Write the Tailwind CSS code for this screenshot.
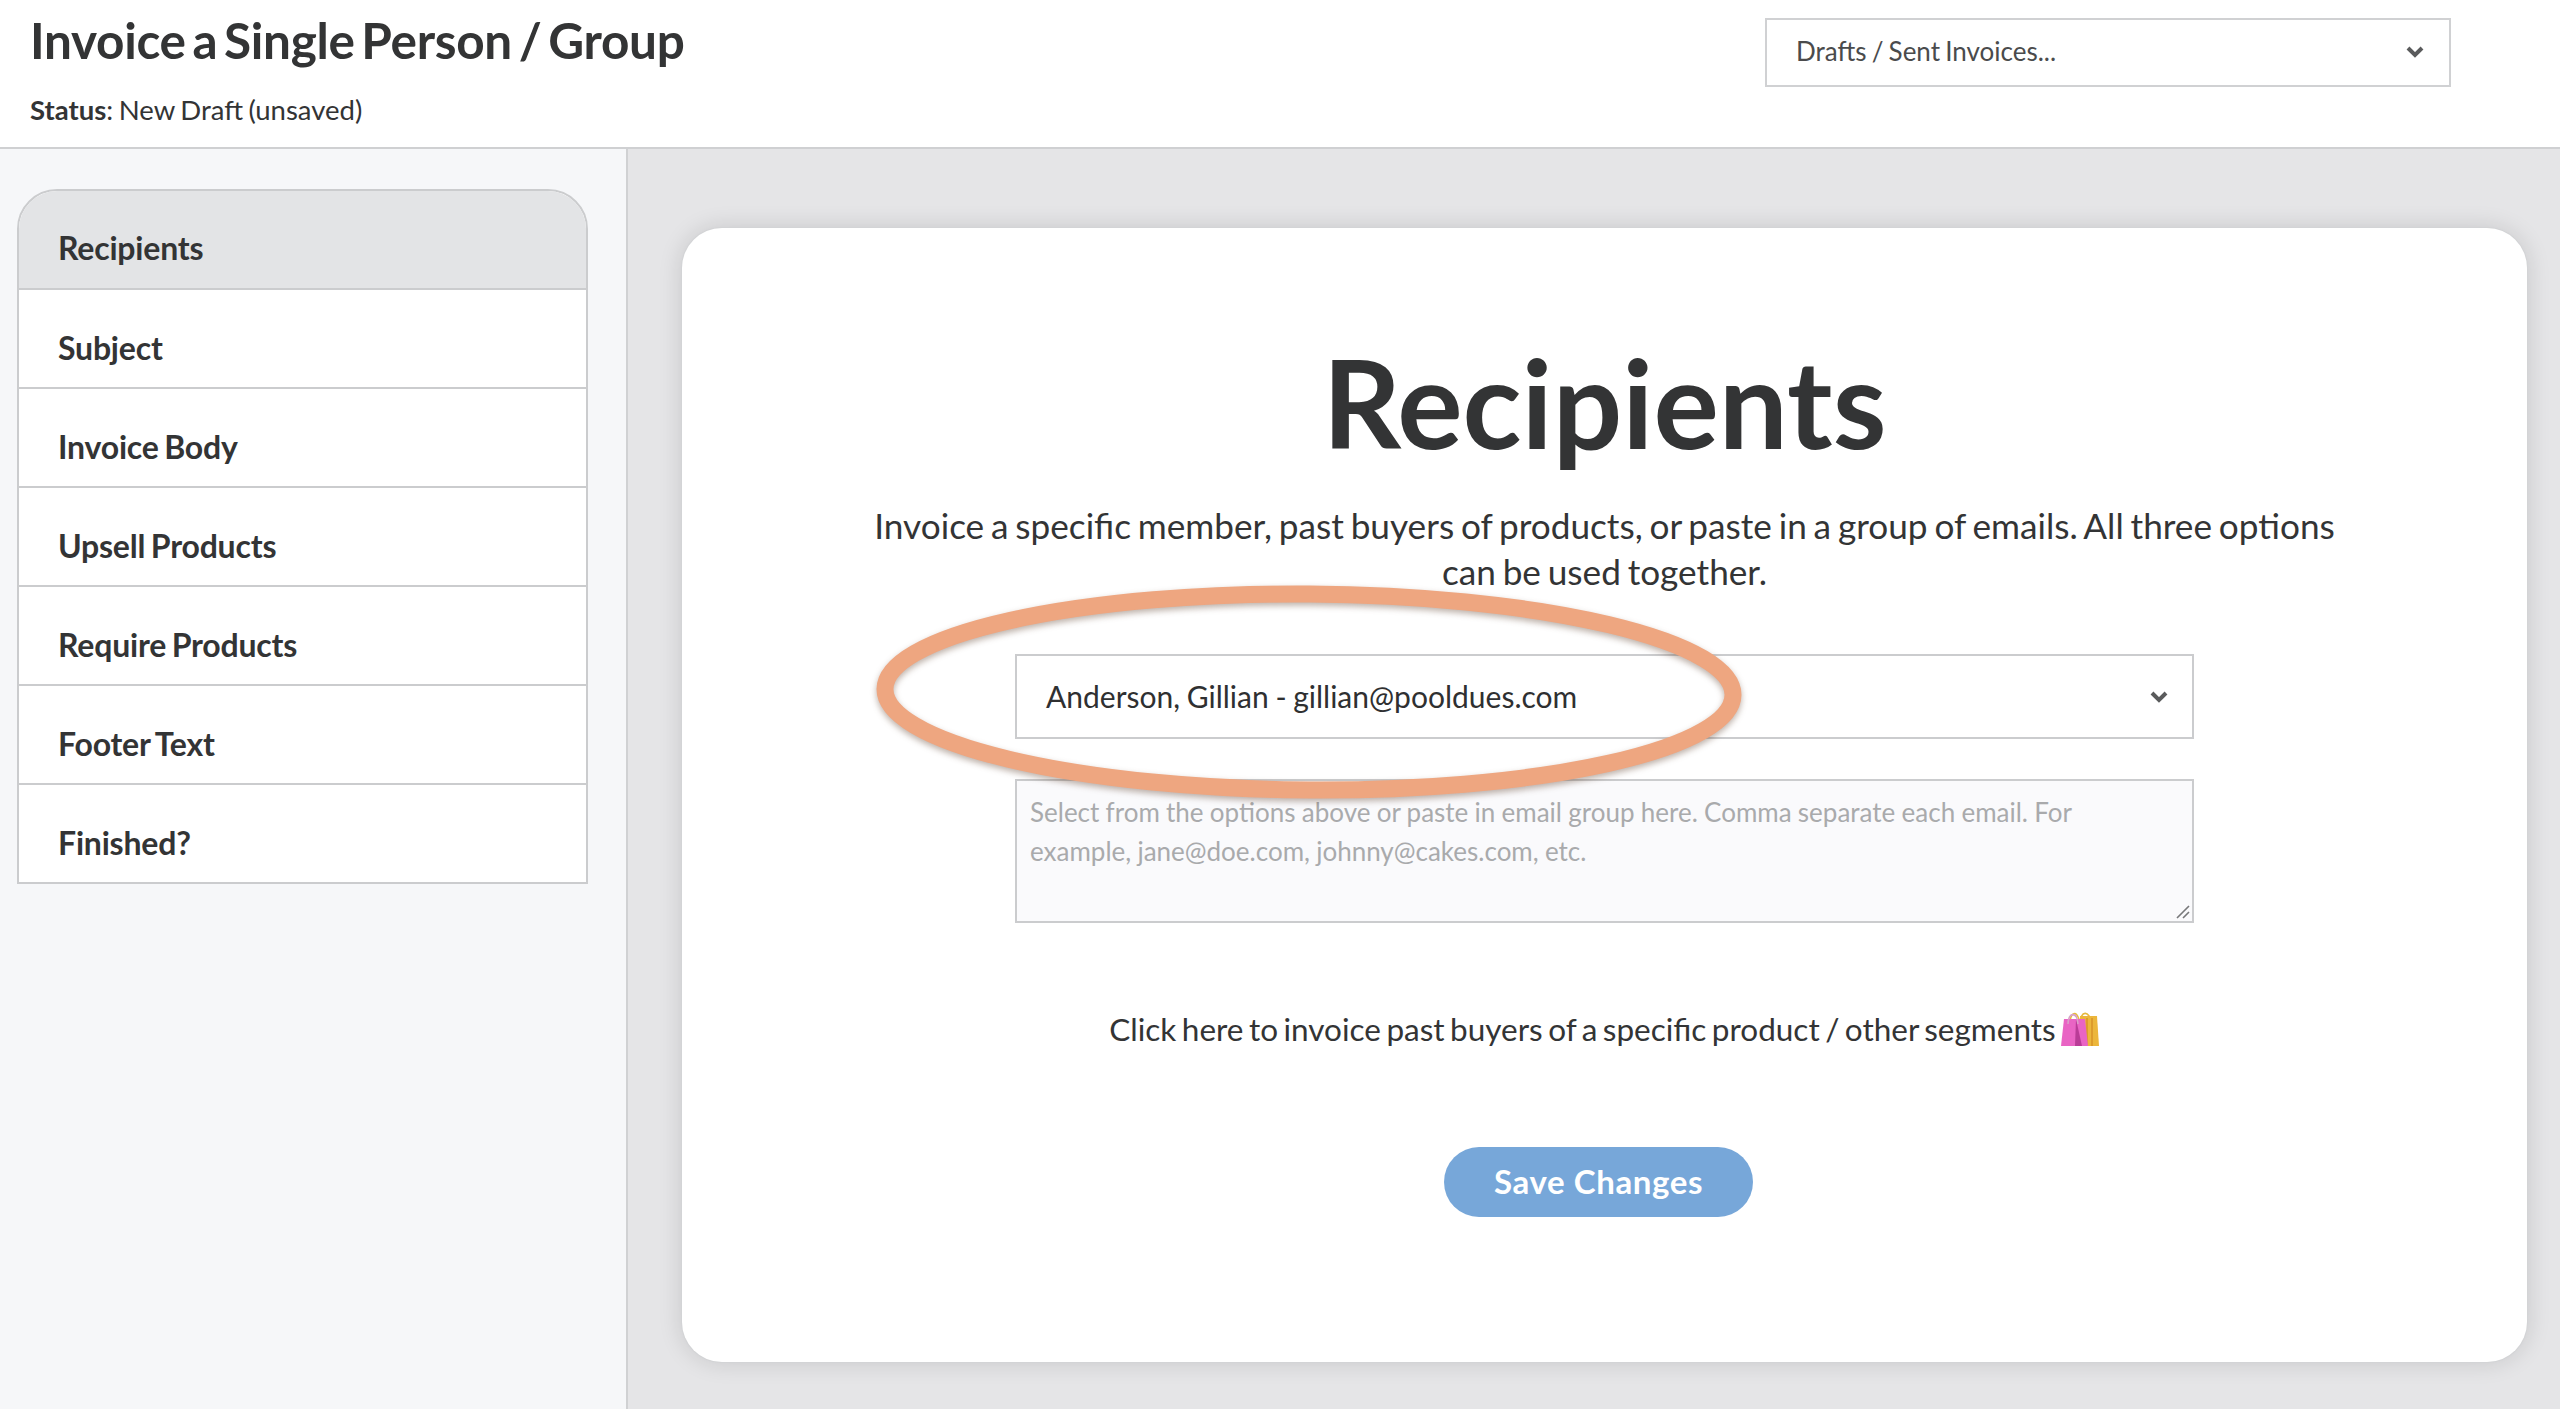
<!DOCTYPE html>
<html lang="en">
<head>
  <meta charset="UTF-8">
  <title>Invoice a Single Person / Group</title>
  <script src="https://cdn.jsdelivr.net/npm/@tailwindcss/browser@4"></script>
</head>
<body class="bg-[#e5e5e7] font-['Lato',sans-serif] text-[#333435]">
  <div class="flex h-[1409px] flex-col overflow-hidden">

    <!-- top bar -->
    <header class="flex h-[149px] shrink-0 items-start justify-between border-b-2 border-[#cfd0d2] bg-white">
      <div class="pl-[30px] pt-[10px]">
        <h1 class="text-[49.5px] font-bold leading-[60px] tracking-[-0.3px] [word-spacing:-5px]">Invoice a Single Person / Group</h1>
        <p class="mt-[22px] text-[27.5px] leading-[36px] [word-spacing:-1.5px]"><b>Status</b>: New Draft (unsaved)</p>
      </div>
      <div class="mr-[109px] mt-[18px] flex h-[69px] w-[686px] items-center justify-between border-2 border-[#d0d1d3] pb-[2px] pl-[29px] pr-[25px] text-[26px] text-[#4a4b4c] [word-spacing:-1.5px]">
        <span>Drafts / Sent Invoices...</span>
        <svg class="h-[14px] w-[18px]" viewBox="0 0 18 14" fill="none" stroke="#5a5b5c" stroke-width="4"><path d="M2 3l7 7 7-7"/></svg>
      </div>
    </header>

    <div class="flex min-h-0 flex-1">
      <!-- steps -->
      <aside class="w-[628px] shrink-0 border-r-2 border-[#d0d1d3] bg-[#f6f7f9] pl-[17px] pr-[38px] pt-[40px]">
        <nav class="overflow-hidden rounded-t-[40px] border-2 border-[#cbccce] bg-white text-[32px] font-bold leading-[97px] tracking-[-0.2px] [word-spacing:-2px]">
          <a class="block h-[99px] border-b-2 border-[#cbccce] bg-[#e3e4e6] pl-[39px] pt-[8px]">Recipients</a>
          <a class="block h-[99px] border-b-2 border-[#cbccce] pl-[39px] pt-[9px]">Subject</a>
          <a class="block h-[99px] border-b-2 border-[#cbccce] pl-[39px] pt-[9px]">Invoice Body</a>
          <a class="block h-[99px] border-b-2 border-[#cbccce] pl-[39px] pt-[9px]">Upsell Products</a>
          <a class="block h-[99px] border-b-2 border-[#cbccce] pl-[39px] pt-[9px]">Require Products</a>
          <a class="block h-[99px] border-b-2 border-[#cbccce] pl-[39px] pt-[9px]">Footer Text</a>
          <a class="block h-[97px] pl-[39px] pt-[9px]">Finished?</a>
        </nav>
      </aside>

      <!-- main -->
      <main class="min-w-0 flex-1 pl-[54px] pr-[33px] pt-[79px]">
        <section class="relative flex h-[1134px] flex-col items-center rounded-[40px] bg-white pt-[109px] shadow-[0_0_0_1px_#d3d4d6,0_0_24px_rgba(0,0,0,0.14)]">
          <h2 class="text-[122.5px] font-bold leading-[130px]">Recipients</h2>
          <p class="mt-[35px] w-[1500px] text-center text-[35.2px] leading-[46px] [word-spacing:-2.2px]">Invoice a specific member, past buyers of products, or paste in a group of emails. All three options can be used together.</p>

          <div class="mt-[60px] flex h-[85px] w-[1179px] shrink-0 items-center justify-between border-2 border-[#cbccce] bg-white pl-[29px] pr-[24px] text-[30px] text-[#2f3031] [word-spacing:-1px]">
            <span>Anderson, Gillian - gillian@pooldues.com</span>
            <svg class="h-[14px] w-[18px]" viewBox="0 0 18 14" fill="none" stroke="#5a5b5c" stroke-width="4"><path d="M2 3l7 7 7-7"/></svg>
          </div>
          <div class="relative mt-[40px] h-[144px] w-[1179px] shrink-0">
            <textarea class="block h-full w-full resize-none border-2 border-[#cbccce] bg-[#fafafc] py-[12px] pl-[13px] pr-[100px] text-[26px] leading-[39px] [word-spacing:-0.4px] placeholder:text-[#a9aaac]" placeholder="Select from the options above or paste in email group here. Comma separate each email. For example, jane@doe.com, johnny@cakes.com, etc."></textarea>
            <svg class="pointer-events-none absolute bottom-[4px] right-[4px] h-[14px] w-[14px]" viewBox="0 0 14 14" fill="none" stroke="#77787a" stroke-width="1.6"><path d="M1 13L13 1M7 13l6-6"/></svg>
          </div>

          <p class="mt-[84px] flex items-center text-[31.5px] leading-[44px] [word-spacing:-2.6px]">Click here to invoice past buyers of a specific product / other segments
            <svg class="ml-[4px] h-[38px] w-[40px]" viewBox="0 0 40 38">
              <path d="M10 14C10 2 17 0 19 10M20 14C20 0 30 0 31 13" fill="none" stroke="#e6b93f" stroke-width="1.6"/>
              <path d="M20 6h17l2 30H24z" fill="#ecb63b"/>
              <path d="M27 8v28M32 8v28" stroke="#d9952a" stroke-width="1.6"/>
              <path d="M4 9h21l3 27H1z" fill="#e964c4"/>
              <path d="M16 9l-1 27h7z" fill="#b93c97"/>
              <path d="M8 14C8 2 17 1 18 14" fill="none" stroke="#d9a0c8" stroke-width="1.6"/>
            </svg>
          </p>

          <button class="mr-[12px] mt-[96px] h-[70px] w-[309px] shrink-0 rounded-full bg-[#77a7d9] text-[33px] font-bold tracking-[0.6px] text-white">Save Changes</button>

          <!-- hand drawn highlight ring -->
          <svg class="pointer-events-none absolute left-[180px] top-[348px] overflow-visible drop-shadow-[0_3px_3px_rgba(90,60,40,0.4)]" width="890" height="250" viewBox="0 0 890 250">
            <ellipse cx="447" cy="116" rx="424" ry="98" transform="rotate(0.4 447 116)" fill="none" stroke="#eea680" stroke-width="17"/>
          </svg>
        </section>
      </main>
    </div>
  </div>
</body>
</html>
